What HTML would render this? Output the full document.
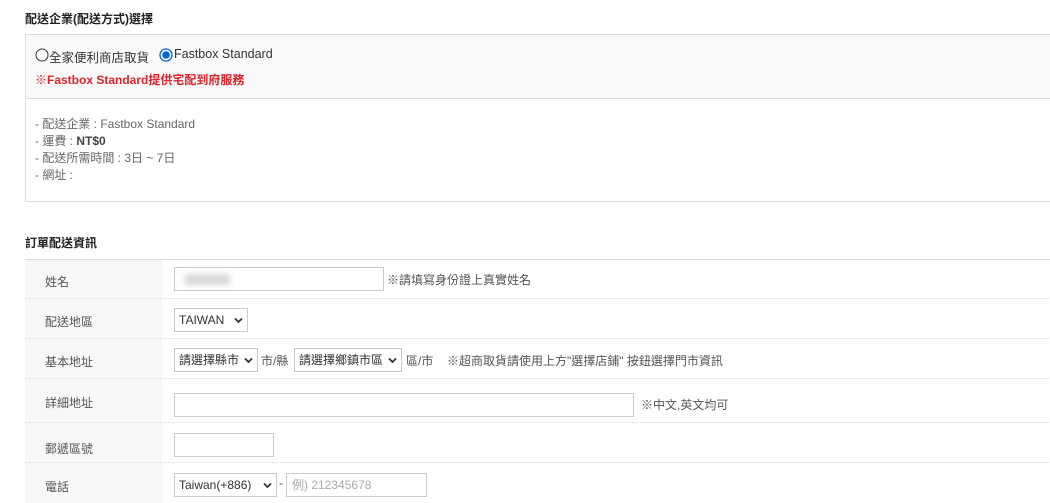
<!DOCTYPE html>
<html><head><meta charset="utf-8"><style>
*{margin:0;padding:0;box-sizing:border-box}
body{width:1050px;height:499px;overflow:hidden;background:#fff;font-family:"Liberation Sans","Noto Sans CJK TC",sans-serif;color:#555;font-size:12px;position:relative}
.a{position:absolute;white-space:nowrap}
.t{font-weight:bold;color:#222;font-size:12px}
.box{position:absolute;left:25px;top:34px;width:1040px;height:168px;border:1px solid #ddd}
.top{height:64px;background:#faf8f8;border-bottom:1px solid #ddd}
.row{position:absolute;left:25px;width:1040px;border-bottom:1px dotted #d8d8d8}
.lab{position:absolute;left:0;top:0;width:137px;height:100%;background:#f7f7f7}
.lt{position:absolute;left:45px;color:#555;font-size:12px;white-space:nowrap}
.in{position:absolute;height:24px;border:1px solid #ccc;background:#fff}
.sel{position:absolute;height:24px;border:1px solid #ccc;background:#fff;font-size:12px;color:#333;line-height:22px;padding-left:4px}
.sel svg{position:absolute;right:4px;top:8px}
</style></head><body>
<div class="a t" style="left:25px;top:10px">配送企業(配送方式)選擇</div>
<div class="box"><div class="top"></div></div>
<svg class="a" style="left:35px;top:48px" width="14" height="14"><circle cx="7" cy="7" r="6" fill="#fff" stroke="#333" stroke-width="1"/></svg>
<div class="a" style="left:49px;top:47px;font-size:12.5px;color:#333">全家便利商店取貨</div>
<svg class="a" style="left:159px;top:48px" width="14" height="14"><circle cx="7" cy="7" r="6" fill="#fff" stroke="#0a66d8" stroke-width="1.3"/><circle cx="7" cy="7" r="3.8" fill="#0a66d8"/></svg>
<div class="a" style="left:174px;top:47px;font-size:12.5px;color:#333">Fastbox Standard</div>
<div class="a" style="left:35px;top:71px;font-weight:bold;color:#d9262b;font-size:12px">※Fastbox Standard提供宅配到府服務</div>
<div class="a" style="left:35px;top:116px;line-height:17px;color:#666">
<div>- 配送企業 : Fastbox Standard</div>
<div>- 運費 : <b style="color:#444">NT$0</b></div>
<div>- 配送所需時間 : 3日 ~ 7日</div>
<div>- 網址 :</div></div>
<div class="a t" style="left:25px;top:234px">訂單配送資訊</div>
<div class="a" style="left:25px;top:259px;width:1040px;border-top:1px solid #ddd"></div>
<div class="row" style="top:260px;height:39px"><div class="lab"></div></div>
<div class="row" style="top:299px;height:40px"><div class="lab"></div></div>
<div class="row" style="top:339px;height:40px"><div class="lab"></div></div>
<div class="row" style="top:379px;height:44px"><div class="lab"></div></div>
<div class="row" style="top:423px;height:40px"><div class="lab"></div></div>
<div class="row" style="top:463px;height:40px;border:0"><div class="lab"></div></div>
<div class="lt" style="top:273px">姓名</div>
<div class="lt" style="top:313px">配送地區</div>
<div class="lt" style="top:353px">基本地址</div>
<div class="lt" style="top:394px">詳細地址</div>
<div class="lt" style="top:440px">郵遞區號</div>
<div class="lt" style="top:478px">電話</div>

<div class="in" style="left:174px;top:267px;width:210px"><div style="position:absolute;left:10px;top:6px;width:45px;height:11px;background:#d8d8d8;filter:blur(3px)"></div></div>
<div class="a" style="left:387px;top:271px;color:#555">※請填寫身份證上真實姓名</div>

<div class="sel" style="left:174px;top:308px;width:74px">TAIWAN<svg width="9" height="7"><path d="M1 1.5L4.5 5 8 1.5" fill="none" stroke="#333" stroke-width="1.8"/></svg></div>

<div class="sel" style="left:174px;top:348px;width:84px">請選擇縣市<svg width="9" height="7"><path d="M1 1.5L4.5 5 8 1.5" fill="none" stroke="#333" stroke-width="1.8"/></svg></div>
<div class="a" style="left:261px;top:352px">市/縣</div>
<div class="sel" style="left:294px;top:348px;width:108px">請選擇鄉鎮市區<svg width="9" height="7"><path d="M1 1.5L4.5 5 8 1.5" fill="none" stroke="#333" stroke-width="1.8"/></svg></div>
<div class="a" style="left:406px;top:352px">區/市</div>
<div class="a" style="left:447px;top:352px">※超商取貨請使用上方"選擇店鋪" 按鈕選擇門市資訊</div>

<div class="in" style="left:174px;top:393px;width:460px"></div>
<div class="a" style="left:641px;top:396px">※中文,英文均可</div>

<div class="in" style="left:174px;top:433px;width:100px"></div>

<div class="sel" style="left:174px;top:473px;width:103px">Taiwan(+886)<svg width="9" height="7"><path d="M1 1.5L4.5 5 8 1.5" fill="none" stroke="#333" stroke-width="1.8"/></svg></div>
<div class="a" style="left:279px;top:476px">-</div>
<div class="in" style="left:286px;top:473px;width:141px;color:#aaa;padding-left:5px;line-height:22px">例) 212345678</div>
</body></html>
